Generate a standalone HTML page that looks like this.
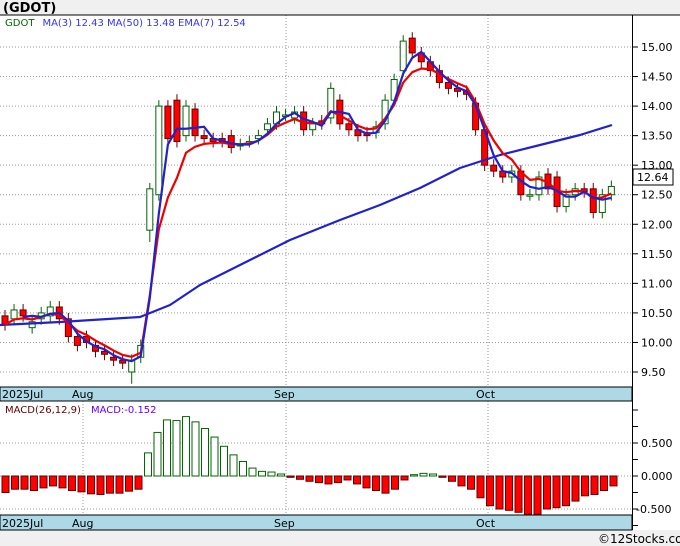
<!DOCTYPE html><html><head><style>
body{margin:0;width:680px;height:546px;background:#f0f0f0;font-family:"Liberation Sans","DejaVu Sans",sans-serif;overflow:hidden}
svg{display:block}
</style></head><body>
<svg id="s" width="680" height="546" xmlns="http://www.w3.org/2000/svg" font-family="DejaVu Sans, Liberation Sans, sans-serif">
<rect x="0" y="0" width="680" height="546" fill="#f0f0f0"/>
<rect x="0" y="15" width="680" height="515" fill="#fff"/>
<text x="3" y="12" font-size="13" font-weight="bold" fill="#000">(GDOT)</text>
<g id="grid" stroke="#999" stroke-dasharray="1,2" stroke-width="1"></g>
<line x1="0" y1="15" x2="680" y2="15" stroke="#000"/>
<line x1="632.5" y1="15" x2="632.5" y2="530" stroke="#000"/>
<rect x="0" y="387" width="632" height="14" fill="#add8e6" stroke="#000"/>
<rect x="0" y="515" width="632" height="15" fill="#add8e6" stroke="#000"/>
<g font-size="11" fill="#000">
<text x="2" y="398">2025Jul</text><text x="72" y="398">Aug</text><text x="274" y="398">Sep</text><text x="476" y="398">Oct</text>
<text x="2" y="527">2025Jul</text><text x="72" y="527">Aug</text><text x="274" y="527">Sep</text><text x="476" y="527">Oct</text>
</g>
<text x="5" y="26" font-size="10"><tspan fill="#060">GDOT</tspan><tspan fill="#33f" dx="8">MA(3)  12.43  MA(50)  13.48  EMA(7)  12.54</tspan></text>
<text x="5" y="413" font-size="10"><tspan fill="#600">MACD(26,12,9)</tspan><tspan fill="#60f" dx="10">MACD:-0.152</tspan></text>
<g id="ax" font-size="11" fill="#000"></g>
<g id="c"></g>
<rect x="633" y="169" width="40" height="16" fill="#fff" stroke="#000"/>
<text x="637" y="181" font-size="11">12.64</text>
<text x="598" y="543" font-size="12" fill="#000">©12Stocks.com</text>
</svg>
<script>
var S=document.getElementById('s'),G=document.getElementById('grid'),A=document.getElementById('ax'),C=document.getElementById('c');
function el(p,t,a){var e=document.createElementNS('http://www.w3.org/2000/svg',t);for(var k in a)e.setAttribute(k,a[k]);p.appendChild(e);return e}
function Y(p){return 47+(15-p)*59.09}
function MY(v){return 476-v*66}
[286,488].forEach(function(x){el(G,'line',{x1:x,y1:15,x2:x,y2:387});el(G,'line',{x1:x,y1:401,x2:x,y2:515})});
el(G,'line',{x1:83,y1:401,x2:83,y2:515});
for(var p=9.5;p<=15.01;p+=0.5){var y=Y(p);el(G,'line',{x1:0,y1:y,x2:632,y2:y});el(A,'line',{x1:632,y1:y,x2:638,y2:y,stroke:'#000'});var t=el(A,'text',{x:641,y:y+4});t.textContent=p.toFixed(2)}
[0.5,0,-0.5].forEach(function(v){var y=MY(v);el(G,'line',{x1:0,y1:y,x2:632,y2:y});var t=el(A,'text',{x:v<0?636:641,y:y+4});t.textContent=v.toFixed(3)});
for(var i=0;i<8;i++)el(A,'line',{x1:632,y1:410+i*16.5,x2:638,y2:410+i*16.5,stroke:'#000'});
var cl=[10.3,10.55,10.45,10.35,10.5,10.6,10.4,10.1,9.95,10.0,9.85,9.8,9.7,9.65,9.7,9.95,12.6,14.0,13.45,13.4,14.0,13.5,13.45,13.4,13.4,13.3,13.35,13.4,13.5,13.7,13.9,13.85,13.9,13.6,13.7,13.7,14.3,13.7,13.6,13.5,13.5,13.65,14.1,14.45,15.1,14.9,14.75,14.6,14.4,14.3,14.25,14.2,13.6,13.0,12.9,12.8,12.9,12.5,12.5,12.8,12.6,12.3,12.5,12.6,12.55,12.2,12.5,12.64];
var op=[10.45,10.4,10.55,10.25,10.4,10.45,10.6,10.4,10.1,10.1,9.95,9.85,9.75,9.7,9.5,9.75,11.9,12.5,14.0,14.1,13.5,13.95,13.5,13.45,13.45,13.5,13.35,13.4,13.45,13.6,13.7,13.85,13.8,13.9,13.6,13.75,13.8,14.1,13.7,13.6,13.55,13.55,13.7,14.1,14.6,15.15,14.9,14.75,14.6,14.4,14.3,14.25,14.05,13.6,13.0,12.9,12.8,12.9,12.5,12.5,12.85,12.8,12.3,12.5,12.6,12.6,12.2,12.5];
var x0=5,dx=9.05,i,n=cl.length;
for(i=0;i<n;i++){var x=x0+i*dx,o=op[i],c=cl[i],up=c>=o,hi=Math.max(o,c)+0.1,lo=Math.min(o,c)-0.1;if(i==14)lo=9.3;if(i==16)lo=11.7;
el(C,'line',{x1:x,y1:Y(hi),x2:x,y2:Y(lo),stroke:up?'#060':'#600'});
var t=Y(Math.max(o,c)),h=Math.max(1.5,Math.abs(Y(o)-Y(c)));
el(C,'rect',{x:x-3,y:t,width:6,height:h,fill:up?'#fff':'#f00',stroke:up?'#060':'#600','stroke-width':1});}
function line(pts,col,w){el(C,'polyline',{points:pts.join(' '),fill:'none',stroke:col,'stroke-width':w,'stroke-linejoin':'round'})}
var e=cl[0],ep=[],mp=[];for(i=0;i<n;i++){e=e+(cl[i]-e)*0.35;ep.push((x0+i*dx)+','+Y(e));if(i>=2){var m=(cl[i]+cl[i-1]+cl[i-2])/3;mp.push((x0+i*dx)+','+Y(m))}}
line([[0,325],[60,322],[140,317],[170,305],[200,285],[240,265],[290,240],[340,220],[380,205],[420,188],[460,168],[500,155],[540,145],[580,135],[612,125]].map(function(a){return a.join(',')}),'#22c',2.2);
line(ep,'#e00',2.2);line(mp,'#22c',2.2);
var mv=[-0.25,-0.2,-0.2,-0.22,-0.18,-0.15,-0.18,-0.22,-0.24,-0.27,-0.28,-0.26,-0.26,-0.23,-0.2,0.35,0.66,0.85,0.84,0.9,0.82,0.72,0.59,0.45,0.32,0.22,0.12,0.07,0.06,0.03,-0.02,-0.05,-0.08,-0.1,-0.12,-0.1,-0.06,-0.12,-0.18,-0.22,-0.26,-0.2,-0.06,0.02,0.04,0.03,-0.02,-0.08,-0.15,-0.2,-0.33,-0.45,-0.5,-0.52,-0.55,-0.58,-0.58,-0.5,-0.48,-0.45,-0.38,-0.3,-0.28,-0.22,-0.15];
for(i=0;i<mv.length;i++){var x=2+i*9.5,v=mv[i],y0=MY(0),y1=MY(v);
el(C,'rect',{x:x,y:Math.min(y0,y1),width:7,height:Math.max(1,Math.abs(y1-y0)),fill:v>=0?'#fff':'#f00',stroke:v>=0?'#060':'#600'});}
</script>
</body></html>
